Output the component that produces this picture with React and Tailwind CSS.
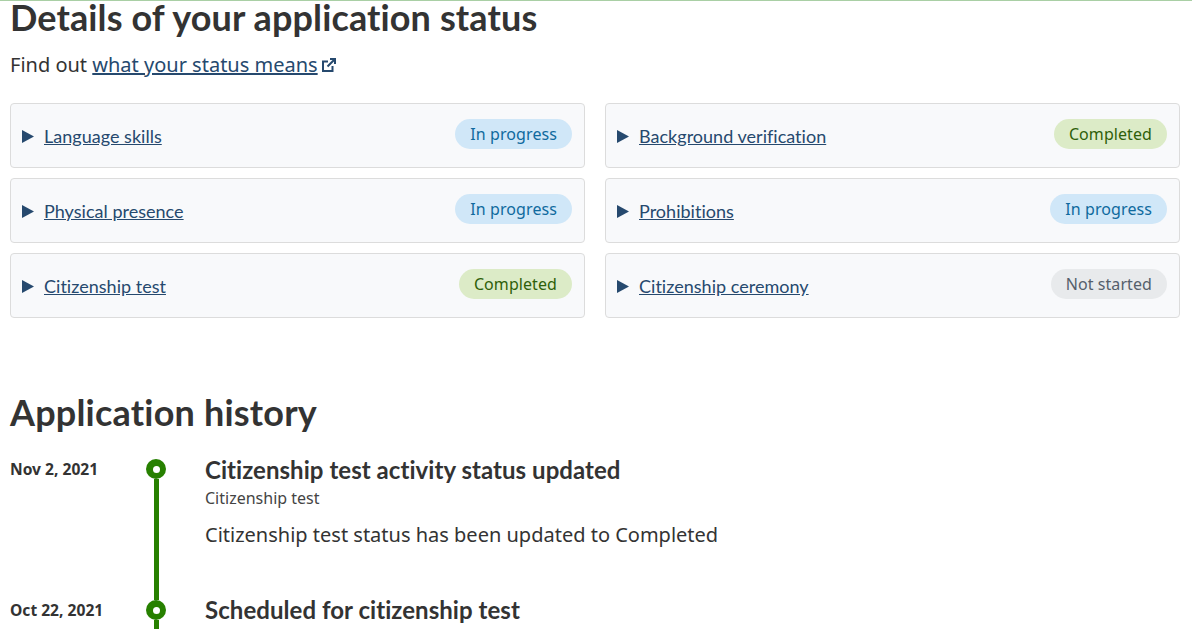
const NOTO = "font-['Noto_Sans',sans-serif]";
const LATO = "font-['Lato',sans-serif]";

const items = [
  ["Language skills", "In progress"],
  ["Background verification", "Completed"],
  ["Physical presence", "In progress"],
  ["Prohibitions", "In progress"],
  ["Citizenship test", "Completed"],
  ["Citizenship ceremony", "Not started"],
];

const badgeStyles = {
  "In progress": "bg-[#d0e7f8] text-[#0f6a9e]",
  Completed: "bg-[#dcebc7] text-[#2f5f0a]",
  "Not started": "bg-[#e8eaec] text-[#555f6b]",
};

function Card({ title, status }) {
  return (
    <div className="h-[65px] rounded-[4px] border border-[#dcdcdc] bg-[#f8f9fb] pl-[11px] pr-[12px] flex justify-between">
      <div className="flex items-center pt-[2px] gap-[10px]">
        <svg width="12" height="13" viewBox="0 0 12 13" className="shrink-0">
          <path d="M0 0 L12 6.5 L0 13 Z" fill="#26496e" />
        </svg>
        <a className={`${LATO} mb-[2px] text-[18px] tracking-[0.02px] leading-[24px] text-[#26496e] underline`}>{title}</a>
      </div>
      <span className={`${NOTO} mt-[15px] h-[30px] px-[15px] rounded-full text-[16px] tracking-[0.08px] leading-[30px] ${badgeStyles[status]}`}>
        {status}
      </span>
    </div>
  );
}

function Entry({ date, title, sub, body, last }) {
  return (
    <div className={`flex ${last ? "h-[30px]" : "h-[141px]"}`}>
      <div className={`${NOTO} w-[136px] shrink-0 text-[15.6px] leading-[20px] font-bold text-[#333]`}>{date}</div>
      <div className="w-[20px] shrink-0 flex flex-col items-center">
        <div className="w-[20px] h-[20px] shrink-0 rounded-full bg-[#278000] flex items-center justify-center">
          <div className="w-[7px] h-[7px] rounded-full bg-white" />
        </div>
        <div className="w-[5px] flex-1 bg-[#278000]" />
      </div>
      <div className="ml-[39px]">
        <h3 className={`${LATO} ${last ? "-mt-[5px]" : "-mt-[4px]"} text-[24px] tracking-[0.05px] leading-[29px] font-bold text-[#333]`}>{title}</h3>
        {sub && <p className={`${NOTO} mt-[4px] text-[16px] leading-[20px] text-[#444]`}>{sub}</p>}
        {body && <p className={`${NOTO} mt-[13px] text-[20px] leading-[28px] text-[#333]`}>{body}</p>}
      </div>
    </div>
  );
}

export default function App() {
  return (
    <div className="h-[629px] overflow-hidden bg-white">
      <div className="h-px bg-[#a9cfa5]" />
      <div className="pl-[10px] pr-[12px]">
        <h1 className={`${LATO} -mt-[2px] text-[36px] tracking-[0.12px] leading-[36px] font-bold text-[#333]`}>Details of your application status</h1>
        <p className={`${NOTO} mt-[14px] text-[20px] leading-[32px] text-[#333] flex items-center`}>
          Find out&nbsp;
          <a className="text-[#26496e] underline">what your status means</a>
          <svg width="14" height="14" viewBox="0 0 14 14" className="ml-[4px]" fill="none" stroke="#26496e" strokeWidth="2">
            <path d="M10.5 8v5H1V3.5h5" />
            <path d="M5.5 8.5L12.5 1.5M8 1h5v5" />
          </svg>
        </p>
        <div className="mt-[22px] grid grid-cols-2 gap-x-[20px] gap-y-[10px]">
          {items.map(([t, s]) => <Card key={t} title={t} status={s} />)}
        </div>
        <h2 className={`${LATO} mt-[74px] text-[36px] tracking-[0.2px] leading-[40px] font-bold text-[#333]`}>Application history</h2>
        <div className="mt-[27px]">
          <Entry date="Nov 2, 2021" title="Citizenship test activity status updated" sub="Citizenship test" body="Citizenship test status has been updated to Completed" />
          <Entry date="Oct 22, 2021" title="Scheduled for citizenship test" last />
        </div>
      </div>
    </div>
  );
}
